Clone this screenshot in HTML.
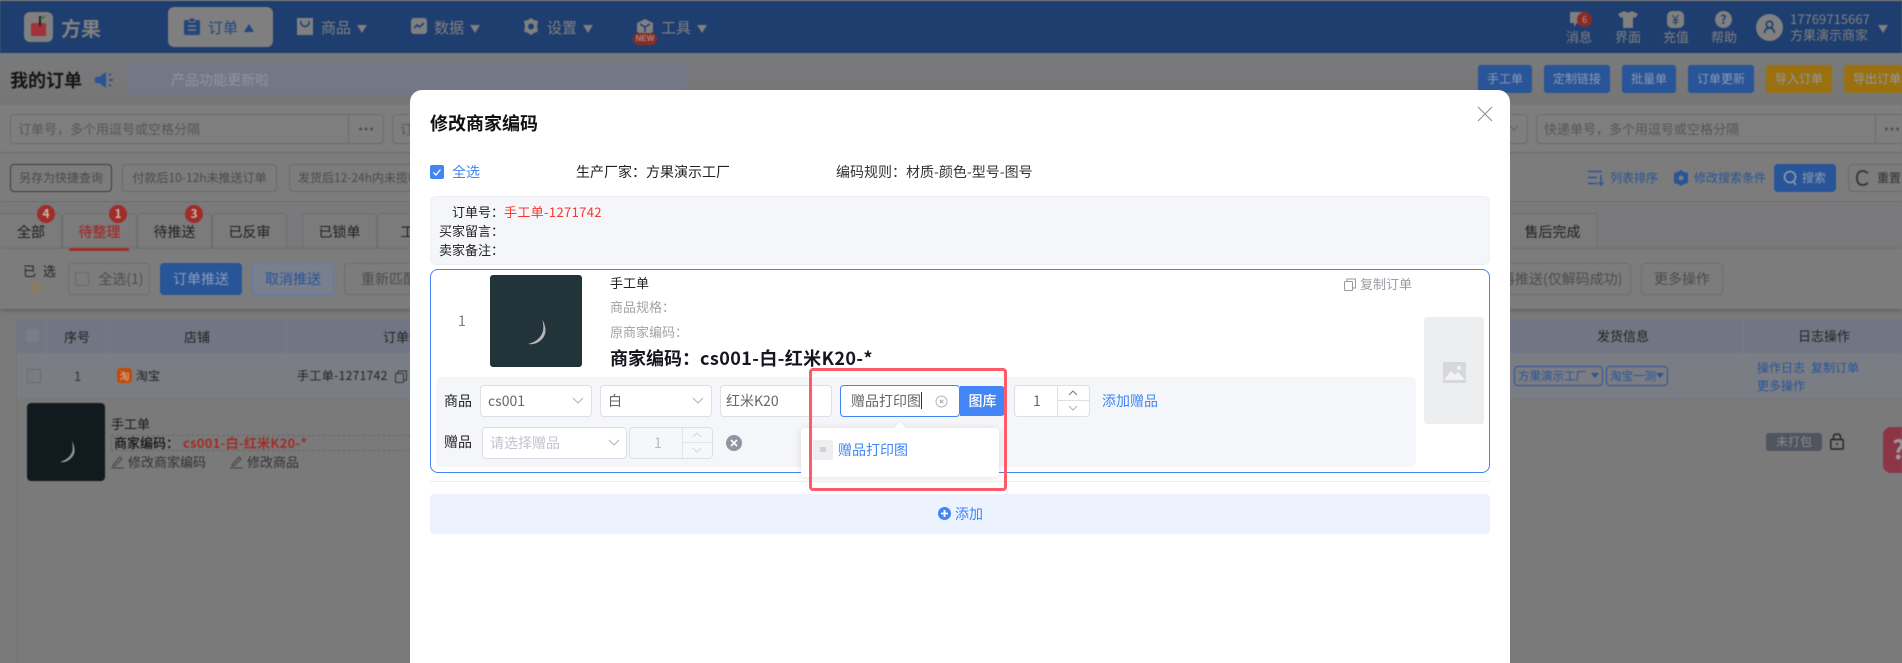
<!DOCTYPE html>
<html lang="zh"><head><meta charset="utf-8"><title>修改商家编码</title>
<style>
*{box-sizing:border-box}
html,body{margin:0;padding:0;width:1902px;height:663px;overflow:hidden;background:#7a7a7a;font-family:"Noto Sans CJK SC","Liberation Sans",sans-serif;font-size:13px;color:#111}
#root{position:relative;width:1902px;height:663px;overflow:hidden}
.a,.t,svg.i{position:absolute}
.t{white-space:nowrap;line-height:20px;height:20px}
#bg{position:absolute;left:0;top:0;width:1902px;height:663px;overflow:hidden;filter:blur(.4px);background:#7a7a7a}
.nv{color:#808080;font-size:15px}
.tri{position:absolute;width:0;height:0;border-left:5px solid transparent;border-right:5px solid transparent;border-top:8px solid #808080}
.sel{position:absolute;background:#fff;border:1px solid #dcdfe6;border-radius:4px;height:32px;font-size:14px;color:#666;line-height:30px;padding-left:7px}
.chip{position:absolute;top:164px;height:28px;border:1px solid #6a6a6a;border-radius:4px;background:#7c7c7c;color:#4a4a4a;font-size:12px;line-height:26px;text-align:center;white-space:nowrap;overflow:hidden}
.inp{position:absolute;top:114px;height:30px;border:1px solid #6c6c6c;border-radius:4px;background:#7e7e7e;color:#565656;font-size:13px;line-height:28px;padding-left:7px;white-space:nowrap;overflow:hidden}
.top{position:absolute;top:65px;height:28px;border-radius:3px;background:#285498;color:#8f9bb0;font-size:12px;line-height:28px;text-align:center;white-space:nowrap}
.tab{position:absolute;top:213px;height:36px;border:1px solid #6e6e6e;border-bottom:0;border-radius:4px 4px 0 0;background:#7b7b7b;color:#202020;font-size:14px;line-height:36px;text-align:center}
.badge{position:absolute;top:205px;width:18px;height:18px;border-radius:9px;background:#a02d28;color:#c8b4b0;font-size:12px;font-weight:700;line-height:18px;text-align:center}
.act{position:absolute;top:263px;height:32px;border:1px solid #6d6d6d;border-radius:4px;background:#7c7c7c;color:#4c4c4c;font-size:14px;line-height:30px;text-align:center;white-space:nowrap;overflow:hidden}
.m{color:#111}
</style></head><body><div id="root">
<div id="bg">
<!-- header -->
<div class="a" style="left:0;top:1px;width:1902px;height:52px;background:#1e3e6f"></div>
<div class="a" style="left:24px;top:12px;width:29px;height:30px;background:#808080;border-radius:6px"></div>
<div class="a" style="left:31px;top:23px;width:15px;height:13px;background:#a2313a;border-radius:2px"></div>
<div class="a" style="left:39px;top:16px;width:2px;height:10px;background:#222"></div>
<svg class="i" style="left:40px;top:15px" width="6" height="6" viewBox="0 0 6 6"><path d="M0 5Q1 1 6 0Q5 4 0 5Z" fill="#3d7a30"/></svg>
<div class="t" style="left:61px;top:18px;font-size:20px;font-weight:700;color:#808080">方果</div>
<div class="a" style="left:168px;top:7px;width:105px;height:40px;background:#7f7f7f;border-radius:6px"></div>
<svg class="i" style="left:184px;top:18px" width="16" height="17" viewBox="0 0 16 17"><path d="M2 2H5V1H11V2H14Q16 2 16 4V15Q16 17 14 17H2Q0 17 0 15V4Q0 2 2 2Z" fill="#21457d"/><rect x="5" y="0" width="6" height="4" rx="1" fill="#21457d" stroke="#7f7f7f"/><path d="M4 8H12M4 12H12" stroke="#7f7f7f" stroke-width="1.5"/></svg>
<div class="t nv" style="left:208px;top:18px;color:#21457d">订单</div>
<div class="a" style="left:244px;top:24px;width:0;height:0;border-left:5px solid transparent;border-right:5px solid transparent;border-bottom:8px solid #21457d"></div>
<svg class="i" style="left:297px;top:18px" width="16" height="17" viewBox="0 0 16 17"><path d="M0 0H16V17H0Z" fill="#808080"/><path d="M4 3V6Q8 11 12 6V3" fill="none" stroke="#1e3e6f" stroke-width="1.5"/></svg>
<div class="t nv" style="left:321px;top:18px">商品</div><div class="tri" style="left:357px;top:25px"></div>
<svg class="i" style="left:411px;top:18px" width="16" height="16" viewBox="0 0 16 16"><rect width="16" height="16" rx="3" fill="#808080"/><path d="M3 10L6 7L8.500 9L13 5" fill="none" stroke="#1e3e6f" stroke-width="1.600"/></svg>
<div class="t nv" style="left:434px;top:18px">数据</div><div class="tri" style="left:470px;top:25px"></div>
<svg class="i" style="left:523px;top:18px" width="16" height="17" viewBox="0 0 16 17"><path d="M8 0L11 2L15 3L14 8.500L15 13.500L11 15L8 17L5 15L1 13.500L2 8.500L1 3L5 2Z" fill="#808080"/><circle cx="8" cy="8.500" r="3" fill="#1e3e6f"/></svg>
<div class="t nv" style="left:547px;top:18px">设置</div><div class="tri" style="left:583px;top:25px"></div>
<svg class="i" style="left:637px;top:19px" width="16" height="17" viewBox="0 0 16 17"><path d="M8 0L16 4V13L8 17L0 13V4Z" fill="#808080"/><path d="M3 5L8 8L13 5M8 8V13" fill="none" stroke="#1e3e6f" stroke-width="1.500"/></svg>
<div class="t nv" style="left:661px;top:18px">工具</div><div class="tri" style="left:697px;top:25px"></div>
<div class="a" style="left:633px;top:33px;width:24px;height:12px;border-radius:6px;background:#8e2a24;color:#9c8f8c;font-size:8px;font-weight:700;line-height:12px;text-align:center;font-family:'Liberation Sans',sans-serif">NEW</div>
<!-- right header -->
<svg class="i" style="left:1570px;top:12px" width="17" height="16" viewBox="0 0 17 16"><path d="M0 0H17V11H7L4 15V11H0Z" fill="#808080"/></svg>
<div class="a" style="left:1577px;top:12px;width:15px;height:15px;border-radius:8px;background:#8e2a24;color:#b09a96;font-size:9px;line-height:15px;text-align:center">6</div>
<svg class="i" style="left:1618px;top:11px" width="20" height="17" viewBox="0 0 20 17"><path d="M6 0Q10 3 14 0L20 3L17 7L15 6V17H5V6L3 7L0 3Z" fill="#808080"/></svg>
<svg class="i" style="left:1667px;top:11px" width="17" height="17" viewBox="0 0 17 17"><rect width="17" height="17" rx="5" fill="#808080"/><path d="M5.500 4L8.500 8L11.500 4M8.500 8V14M5.500 9H11.500M5.500 11.500H11.500" fill="none" stroke="#1e3e6f" stroke-width="1"/></svg>
<div class="a" style="left:1715px;top:11px;width:17px;height:17px;border-radius:9px;background:#808080;color:#1e3e6f;font-size:12px;font-weight:700;line-height:17px;text-align:center">?</div>
<div class="t" style="left:1566px;top:27px;color:#808080">消息</div>
<div class="t" style="left:1615px;top:27px;color:#808080">界面</div>
<div class="t" style="left:1663px;top:27px;color:#808080">充值</div>
<div class="t" style="left:1711px;top:27px;color:#808080">帮助</div>
<div class="a" style="left:1756px;top:14px;width:27px;height:27px;border-radius:14px;background:#808080"></div>
<svg class="i" style="left:1763px;top:20px" width="13" height="14" viewBox="0 0 13 14"><circle cx="6.500" cy="4.500" r="3.200" fill="none" stroke="#1e3e6f" stroke-width="1.600"/><path d="M1.500 13Q2 8 6.500 8Q11 8 11.500 13" fill="none" stroke="#1e3e6f" stroke-width="1.600"/></svg>
<div class="t" style="left:1790px;top:9px;color:#808080;letter-spacing:.05px">17769715667</div>
<div class="t" style="left:1790px;top:25px;color:#808080">方果演示商家</div>
<div class="tri" style="left:1878px;top:25px"></div>
<!-- title row -->
<div class="a" style="left:0;top:53px;width:1902px;height:52px;background:linear-gradient(#797a7c,#767676)"></div>
<div class="t" style="left:10px;top:70px;font-size:18px;font-weight:700;color:#141414">我的订单</div>
<svg class="i" style="left:95px;top:72px" width="20" height="16" viewBox="0 0 20 16"><path d="M0 5H4L11 0V16L4 11H0Z" fill="#285498"/><path d="M14 3L16 2M14 8H18M14 13L16 14" stroke="#285498" stroke-width="2"/></svg>
<div class="a" style="left:127px;top:63px;width:560px;height:32px;background:#737786;border-radius:4px"></div>
<div class="t" style="left:171px;top:70px;font-size:14px;color:#93959d">产品功能更新啦</div>
<div class="top" style="left:1478px;width:54px">手工单</div>
<div class="top" style="left:1544px;width:66px">定制链接</div>
<div class="top" style="left:1622px;width:54px">批量单</div>
<div class="top" style="left:1688px;width:66px">订单更新</div>
<div class="top" style="left:1766px;width:66px;background:#9a7010">导入订单</div>
<div class="top" style="left:1844px;width:66px;background:#9a7010">导出订单</div>
<!-- search row -->
<div class="a" style="left:0;top:105px;width:1902px;height:48px;background:#7e7e7e;border-bottom:1px solid #6a6a6a"></div>
<div class="inp" style="left:10px;width:374px">订单号，多个用逗号或空格分隔</div>
<div class="a" style="left:348px;top:114px;width:1px;height:30px;background:#6c6c6c"></div>
<svg class="i" style="left:358px;top:127px" width="16" height="4" viewBox="0 0 16 4"><circle cx="2.500" cy="2" r="1.500" fill="#505050"/><circle cx="8" cy="2" r="1.500" fill="#505050"/><circle cx="13.500" cy="2" r="1.500" fill="#505050"/></svg>
<div class="inp" style="left:392px;width:40px">订</div>
<div class="inp" style="left:1480px;width:48px"></div>
<svg class="i" style="left:1509px;top:125px" width="10" height="7" viewBox="0 0 10 7"><path d="M1 1L5 5L9 1" fill="none" stroke="#5f5f5f"/></svg>
<div class="inp" style="left:1536px;width:380px">快递单号，多个用逗号或空格分隔</div>
<div class="a" style="left:1875px;top:114px;width:1px;height:30px;background:#6c6c6c"></div>
<svg class="i" style="left:1884px;top:127px" width="16" height="4" viewBox="0 0 16 4"><circle cx="2.500" cy="2" r="1.500" fill="#505050"/><circle cx="8" cy="2" r="1.500" fill="#505050"/><circle cx="13.500" cy="2" r="1.500" fill="#505050"/></svg>
<!-- chips -->
<div class="a" style="left:0;top:154px;width:1902px;height:48px;background:#7c7c7c;border-bottom:1px solid #6c6c6c"></div>
<div class="chip" style="left:10px;width:102px;border-color:#3c3c3c">另存为快捷查询</div>
<div class="chip" style="left:122px;width:155px">付款后10-12h未推送订单</div>
<div class="chip" style="left:289px;width:140px">发货后12-24h内未揽收</div>
<svg class="i" style="left:1588px;top:170px" width="16" height="16" viewBox="0 0 16 16"><path d="M0 1.500H14M0 7.500H9M0 13.500H9M13 5V15M10.500 12.500L13 15L15.500 12.500" fill="none" stroke="#285498" stroke-width="1.500"/></svg>
<div class="t" style="left:1610px;top:168px;font-size:12px;color:#285498">列表排序</div>
<svg class="i" style="left:1674px;top:170px" width="14" height="16" viewBox="0 0 14 16"><path d="M7 0L10 2L14 3V13L10 14L7 16L4 14L0 13V3L4 2Z" fill="#285498"/><circle cx="7" cy="8" r="2.500" fill="#7c7c7c"/></svg>
<div class="t" style="left:1694px;top:168px;font-size:12px;color:#285498">修改搜索条件</div>
<div class="a" style="left:1774px;top:164px;width:62px;height:28px;background:#285498;border-radius:4px"></div>
<svg class="i" style="left:1783px;top:170px" width="14" height="16" viewBox="0 0 14 16"><circle cx="7" cy="7" r="5.500" fill="none" stroke="#8f9bb0" stroke-width="1.600"/><path d="M10 11L13 15" stroke="#8f9bb0" stroke-width="1.600"/></svg>
<div class="t" style="left:1802px;top:168px;font-size:12px;color:#8f9bb0">搜索</div>
<div class="chip" style="left:1848px;width:66px;text-align:left;padding-left:28px;color:#303030">重置</div>
<svg class="i" style="left:1856px;top:170px" width="14" height="16" viewBox="0 0 14 16"><path d="M12 3Q9 1 7 1Q1 1 1 8Q1 15 7 15Q9 15 12 13" fill="none" stroke="#333" stroke-width="1.800"/></svg>
<!-- tabs -->
<div class="a" style="left:0;top:202px;width:1902px;height:47px;background:#7a7a7d"></div>
<div class="tab" style="left:-13px;width:75px;padding-left:13px">全部</div>
<div class="tab" style="left:62px;width:75px;color:#a02d28;font-weight:500">待整理</div>
<div class="tab" style="left:137px;width:75px">待推送</div>
<div class="tab" style="left:212px;width:75px">已反审</div>
<div class="tab" style="left:302px;width:75px">已锁单</div>
<div class="tab" style="left:377px;width:75px">工厂</div>
<div class="tab" style="left:1507px;width:91px">售后完成</div>
<div class="badge" style="left:37px">4</div><div class="badge" style="left:109px">1</div><div class="badge" style="left:185px">3</div>
<!-- action row -->
<div class="a" style="left:0;top:249px;width:1902px;height:60px;background:#7c7c7c;box-shadow:0 1px 4px #555"></div>
<div class="a" style="left:69px;top:248px;width:60px;height:3px;background:#a02d28;border-radius:1px"></div>
<div class="t" style="left:23px;top:261px;color:#252525;letter-spacing:2px">已 选</div>
<div class="t" style="left:32px;top:278px;color:#ab7c22;font-size:14px">0</div>
<div class="act" style="left:68px;width:82px;padding-left:24px">全选(1)</div>
<div class="a" style="left:75px;top:272px;width:14px;height:14px;border:1px solid #6a6a6a;border-radius:2px"></div>
<div class="act" style="left:160px;width:82px;background:#285498;border-color:#285498;color:#8d9db8">订单推送</div>
<div class="act" style="left:252px;width:82px;background:#787f8d;border-color:#5a7cb5;color:#285498">取消推送</div>
<div class="act" style="left:344px;width:90px">重新匹配</div>
<div class="act" style="left:1500px;width:131px;text-align:right;padding-right:12px">再推送(仅解码成功)</div>
<div class="act" style="left:1641px;width:82px">更多操作</div>
<!-- table -->
<div class="a" style="left:16px;top:319px;width:1886px;height:34px;background:#727684"></div>
<div class="a" style="left:46px;top:319px;width:1px;height:34px;background:#787c8a"></div>
<div class="a" style="left:106px;top:319px;width:1px;height:34px;background:#787c8a"></div>
<div class="a" style="left:286px;top:319px;width:1px;height:34px;background:#787c8a"></div>
<div class="a" style="left:1743px;top:319px;width:1px;height:34px;background:#787c8a"></div>
<div class="a" style="left:26px;top:329px;width:13px;height:13px;background:#7b7d85;border-radius:2px"></div>
<div class="t" style="left:64px;top:327px;color:#222">序号</div>
<div class="t" style="left:184px;top:327px;color:#222">店铺</div>
<div class="t" style="left:383px;top:327px;color:#222">订单信息</div>
<div class="t" style="left:1597px;top:326px;color:#222">发货信息</div>
<div class="t" style="left:1798px;top:326px;color:#222">日志操作</div>
<div class="a" style="left:16px;top:353px;width:1886px;height:46px;background:#7b7d84;border-bottom:1px solid #74767f"></div>
<div class="a" style="left:16px;top:353px;width:1px;height:310px;background:#737373"></div>
<div class="a" style="left:27px;top:369px;width:14px;height:14px;border:1px solid #6a6a6a;border-radius:2px"></div>
<div class="t" style="left:74px;top:366px;color:#333">1</div>
<div class="a" style="left:117px;top:368px;width:15px;height:15px;border-radius:3px;background:#c24c0b;color:#d8b8a4;font-size:10px;line-height:15px;text-align:center">淘</div>
<div class="t" style="left:136px;top:366px;font-size:12px;color:#222">淘宝</div>
<div class="t" style="left:297px;top:366px;font-size:12px;color:#222;letter-spacing:.35px">手工单-1271742</div>
<svg class="i" style="left:395px;top:370px" width="12" height="13" viewBox="0 0 12 13"><rect x=".5" y="3.500" width="8" height="9" rx="1" fill="none" stroke="#333"/><path d="M3 3V1H11.500V10H9" fill="none" stroke="#333"/></svg>
<svg class="i" style="left:27px;top:403px" width="78" height="78" viewBox="0 0 78 78"><rect width="78" height="78" rx="4" fill="#111a1e"/><path d="M45 38Q51 50 43 56Q39 60 33 59Q43 56 45.500 48Q46 43 45 38Z" fill="#9b9b9b"/></svg>
<div class="t" style="left:111px;top:414px;color:#1a1a1a">手工单</div>
<div class="a" style="left:111px;top:435px;width:320px;height:16px;border:1px dashed #666"></div>
<div class="t" style="left:114px;top:433px;font-weight:500;color:#111">商家编码：</div>
<div class="t" style="left:183px;top:433px;font-weight:700;color:#a02d28;letter-spacing:.25px">cs001-白-红米K20-*</div>
<svg class="i" style="left:111px;top:455px" width="13" height="14" viewBox="0 0 13 14"><path d="M2 10L9 2L11 4L4 11H2ZM0 13H13" fill="none" stroke="#444"/></svg>
<div class="t" style="left:128px;top:452px;color:#333">修改商家编码</div>
<svg class="i" style="left:230px;top:455px" width="13" height="14" viewBox="0 0 13 14"><path d="M2 10L9 2L11 4L4 11H2ZM0 13H13" fill="none" stroke="#444"/></svg>
<div class="t" style="left:247px;top:452px;color:#333">修改商品</div>
<!-- table right -->
<div class="a" style="left:1514px;top:366px;width:89px;height:20px;border:1px solid #285498;border-radius:4px;color:#285498;font-size:11.500px;line-height:18px;padding-left:3px;white-space:nowrap;overflow:hidden">方果演示工厂</div>
<div class="a" style="left:1591px;top:373px;width:0;height:0;border-left:4px solid transparent;border-right:4px solid transparent;border-top:5px solid #285498"></div>
<div class="a" style="left:1606px;top:366px;width:62px;height:20px;border:1px solid #285498;border-radius:4px;color:#285498;font-size:11.500px;line-height:18px;padding-left:3px;white-space:nowrap;overflow:hidden">淘宝一测</div>
<div class="a" style="left:1656px;top:373px;width:0;height:0;border-left:4px solid transparent;border-right:4px solid transparent;border-top:5px solid #285498"></div>
<div class="t" style="left:1757px;top:358px;font-size:12px;color:#285498">操作日志</div>
<div class="t" style="left:1811px;top:358px;font-size:12px;color:#285498">复制订单</div>
<div class="t" style="left:1757px;top:376px;font-size:12px;color:#285498">更多操作</div>
<div class="a" style="left:1766px;top:433px;width:56px;height:18px;background:#50545e;border-radius:3px;color:#888b90;font-size:12px;line-height:18px;text-align:center">未打包</div>
<svg class="i" style="left:1830px;top:433px" width="14" height="17" viewBox="0 0 14 17"><rect x=".8" y="6.500" width="12.400" height="9.500" rx="1" fill="none" stroke="#222" stroke-width="1.400"/><path d="M3.500 6.500V4Q3.500 1 7 1Q10.500 1 10.500 4V6.500M7 10V12" fill="none" stroke="#222" stroke-width="1.400"/></svg>
<div class="a" style="left:1883px;top:427px;width:30px;height:46px;background:#8b3545;border-radius:8px"></div>
<div class="t" style="left:1892px;top:436px;font-size:26px;font-weight:700;color:#9c9c9c;line-height:26px;height:26px">?</div>
</div>

<!-- modal -->
<div class="a" style="left:410px;top:90px;width:1100px;height:573px;background:#fff;border-radius:12px 12px 0 0"></div>
<div class="t m" style="left:430px;top:113px;font-size:18px;font-weight:700">修改商家编码</div>
<svg class="i" style="left:1477px;top:106px" width="16" height="16" viewBox="0 0 16 16"><path d="M1 1L15 15M15 1L1 15" stroke="#8c8c8c" stroke-width="1"/></svg>
<div class="a" style="left:430px;top:165px;width:14px;height:14px;background:#4285f4;border-radius:2px"></div>
<svg class="i" style="left:430px;top:165px" width="14" height="14" viewBox="0 0 14 14"><path d="M3.500 7.500L6 10L10.500 4.500" fill="none" stroke="#fff" stroke-width="1.300"/></svg>
<div class="t" style="left:452px;top:162px;font-size:14px;color:#4285f4">全选</div>
<div class="t" style="left:576px;top:162px;font-size:14px;color:#222">生产厂家：方果演示工厂</div>
<div class="t" style="left:836px;top:162px;font-size:14px;color:#333">编码规则：材质-颜色-型号-图号</div>
<!-- info -->
<div class="a" style="left:430px;top:196px;width:1060px;height:69px;background:#f5f6fa;border:1px solid #eeeff3;border-radius:6px"></div>
<div class="t" style="left:452px;top:202px;color:#222">订单号：</div>
<div class="t" style="left:504px;top:202px;color:#f5392d;letter-spacing:.35px">手工单-1271742</div>
<div class="t" style="left:439px;top:221px;color:#222">买家留言：</div>
<div class="t" style="left:439px;top:240px;color:#222">卖家备注：</div>
<!-- item -->
<div class="a" style="left:430px;top:269px;width:1060px;height:204px;background:#fff;border:1px solid #4285f4;border-radius:8px"></div>
<div class="t" style="left:458px;top:311px;font-size:14px;color:#777">1</div>
<svg class="i" style="left:490px;top:275px" width="92" height="92" viewBox="0 0 92 92"><rect width="92" height="92" rx="3" fill="#223339"/><path d="M52 44Q60 58 50 66Q45 70 38 69Q50 66 53 56Q54 50 52 44Z" fill="#b5b5b5"/></svg>
<div class="t" style="left:610px;top:273px;color:#222">手工单</div>
<div class="t" style="left:610px;top:297px;color:#a1a3a8">商品规格：</div>
<div class="t" style="left:610px;top:322px;color:#a1a3a8">原商家编码：</div>
<div class="t" style="left:610px;top:348px;font-size:18px;font-weight:700;color:#15151f">商家编码：<span style="letter-spacing:.4px">cs001-白-红米K20-*</span></div>
<svg class="i" style="left:1344px;top:278px" width="12" height="13" viewBox="0 0 12 13"><rect x=".5" y="3.500" width="8" height="9" rx="1" fill="none" stroke="#999"/><path d="M3 3V1H11.500V10H9" fill="none" stroke="#999"/></svg>
<div class="t" style="left:1360px;top:274px;color:#9a9ca3">复制订单</div>
<div class="a" style="left:1424px;top:317px;width:60px;height:107px;background:#edeef0;border-radius:3px"></div>
<svg class="i" style="left:1443px;top:362px" width="23" height="21" viewBox="0 0 23 21"><rect width="23" height="21" rx="1" fill="#d6d8dc"/><path d="M1 18L8 9L12 13L15 10L22 18Z" fill="#f3f3f5"/><circle cx="16" cy="6" r="2" fill="#f3f3f5"/></svg>
<!-- panel -->
<div class="a" style="left:436px;top:377px;width:980px;height:90px;background:#f5f6fa;border-radius:6px"></div>
<div class="t" style="left:444px;top:391px;font-size:14px;color:#222">商品</div>
<div class="sel" style="left:480px;top:385px;width:112px">cs001</div>
<svg class="i" style="left:572px;top:397px" width="12" height="8" viewBox="0 0 12 8"><path d="M1 1L6 6L11 1" fill="none" stroke="#b0b3ba"/></svg>
<div class="sel" style="left:600px;top:385px;width:112px">白</div>
<svg class="i" style="left:692px;top:397px" width="12" height="8" viewBox="0 0 12 8"><path d="M1 1L6 6L11 1" fill="none" stroke="#b0b3ba"/></svg>
<div class="sel" style="left:720px;top:385px;width:112px;padding-left:5px">红米K20</div>
<div class="sel" style="left:840px;top:385px;width:120px;border-color:#4285f4;padding-left:10px">赠品打印图</div>
<div class="a" style="left:921px;top:392px;width:1px;height:17px;background:#333"></div>
<svg class="i" style="left:935px;top:395px" width="13" height="13" viewBox="0 0 13 13"><circle cx="6.500" cy="6.500" r="5.500" fill="none" stroke="#b5b7bc"/><path d="M4.800 4.800L8.200 8.200M8.200 4.800L4.800 8.200" stroke="#a0a2a8"/></svg>
<div class="a" style="left:960px;top:386px;width:45px;height:30px;background:#4285f4;border-radius:0 4px 4px 0;color:#fff;font-size:14px;font-weight:500;line-height:30px;text-align:center">图库</div>
<div class="sel" style="left:1014px;top:385px;width:76px;text-align:left;padding-left:18px">1</div>
<div class="a" style="left:1057px;top:386px;width:1px;height:30px;background:#dcdfe6"></div>
<div class="a" style="left:1058px;top:400px;width:31px;height:1px;background:#dcdfe6"></div>
<svg class="i" style="left:1068px;top:389px" width="10" height="7" viewBox="0 0 10 7"><path d="M1 6L5 2L9 6" fill="none" stroke="#777"/></svg>
<svg class="i" style="left:1068px;top:405px" width="10" height="7" viewBox="0 0 10 7"><path d="M1 1L5 5L9 1" fill="none" stroke="#b0b3ba"/></svg>
<div class="t" style="left:1102px;top:391px;font-size:14px;color:#4285f4">添加赠品</div>
<div class="t" style="left:444px;top:432px;font-size:14px;color:#222">赠品</div>
<div class="sel" style="left:482px;top:427px;width:145px;height:32px;color:#c0c4cc">请选择赠品</div>
<svg class="i" style="left:608px;top:439px" width="12" height="8" viewBox="0 0 12 8"><path d="M1 1L6 6L11 1" fill="none" stroke="#b0b3ba"/></svg>
<div class="sel" style="left:629px;top:427px;width:84px;height:32px;background:#f5f7fa;color:#b5b8c0;padding-left:24px">1</div>
<div class="a" style="left:682px;top:428px;width:1px;height:30px;background:#e2e4ea"></div>
<div class="a" style="left:683px;top:442px;width:29px;height:1px;background:#e2e4ea"></div>
<svg class="i" style="left:692px;top:431px" width="10" height="7" viewBox="0 0 10 7"><path d="M1 6L5 2L9 6" fill="none" stroke="#d5d7dc"/></svg>
<svg class="i" style="left:692px;top:447px" width="10" height="7" viewBox="0 0 10 7"><path d="M1 1L5 5L9 1" fill="none" stroke="#d5d7dc"/></svg>
<svg class="i" style="left:726px;top:435px" width="16" height="16" viewBox="0 0 16 16"><circle cx="8" cy="8" r="8" fill="#8f95a3"/><path d="M5 5L11 11M11 5L5 11" stroke="#fff" stroke-width="1.600"/></svg>
<!-- popup -->
<div class="a" style="left:801px;top:428px;width:198px;height:49px;background:#fff;border-radius:4px;box-shadow:0 1px 8px rgba(0,0,0,.12)"></div>
<div class="a" style="left:895px;top:424px;width:10px;height:10px;background:#fff;transform:rotate(45deg);box-shadow:-1px -1px 2px rgba(0,0,0,.05)"></div>
<div class="a" style="left:813px;top:440px;width:20px;height:20px;background:#edeef0;border-radius:2px"></div>
<div class="a" style="left:820px;top:447px;width:6px;height:5px;background:#d0d2d6"></div>
<div class="t" style="left:838px;top:440px;font-size:14px;color:#4285f4">赠品打印图</div>
<!-- hr + add -->
<div class="a" style="left:430px;top:481px;width:1060px;height:1px;background:#eceded"></div>
<div class="a" style="left:430px;top:494px;width:1060px;height:40px;background:#ecf3fe;border-radius:4px"></div>
<svg class="i" style="left:938px;top:507px" width="13" height="13" viewBox="0 0 13 13"><circle cx="6.500" cy="6.500" r="6.500" fill="#4285f4"/><path d="M3 6.500H10M6.500 3V10" stroke="#fff" stroke-width="1.800"/></svg>
<div class="t" style="left:955px;top:504px;font-size:14px;color:#4285f4">添加</div>
<!-- red highlight -->
<div class="a" style="left:809px;top:368px;width:198px;height:123px;border:3px solid #ff5a6a;border-radius:4px"></div>
</div></body></html>
